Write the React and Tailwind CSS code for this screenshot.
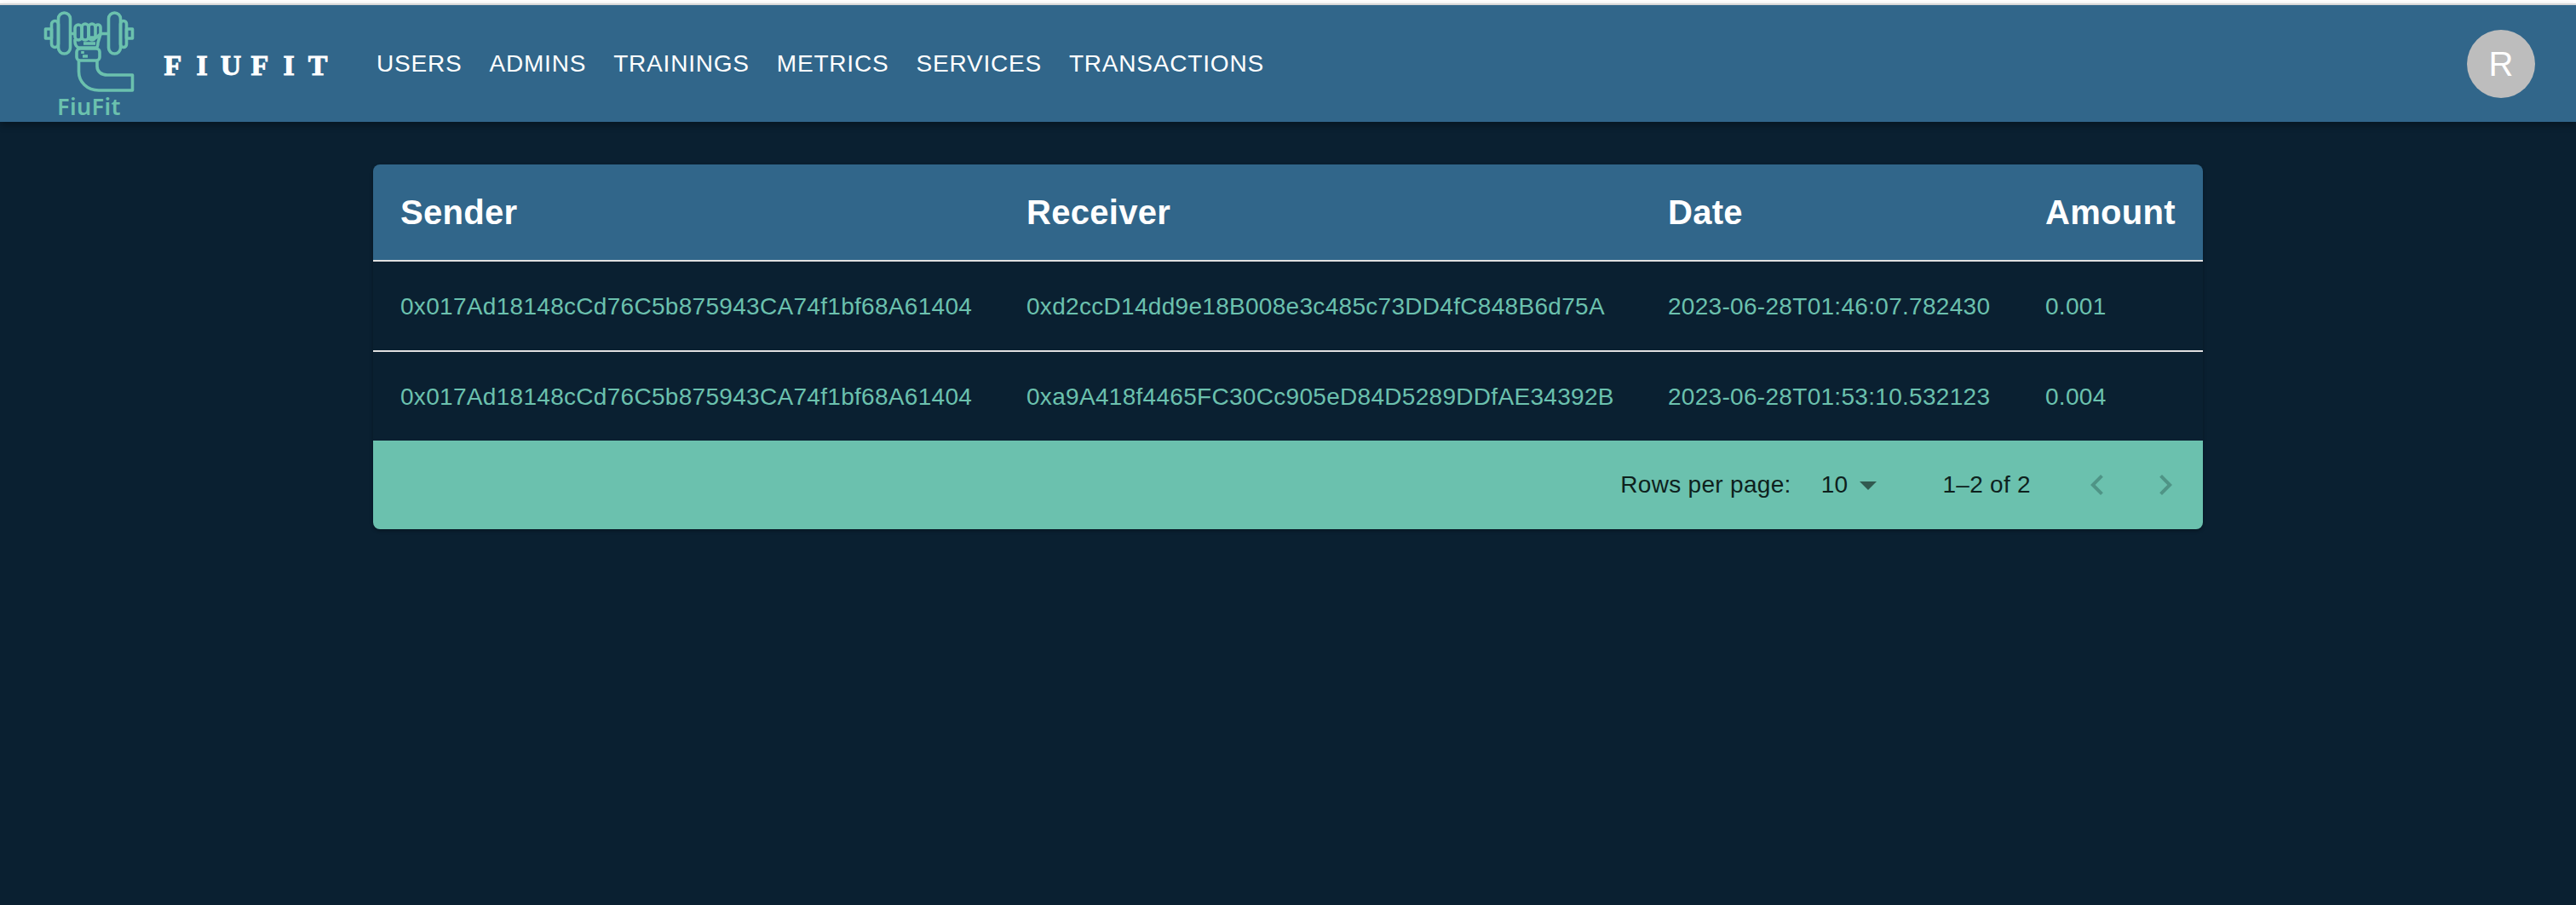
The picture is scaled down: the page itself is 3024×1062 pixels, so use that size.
import React from "react";

const navItems = ["USERS", "ADMINS", "TRAININGS", "METRICS", "SERVICES", "TRANSACTIONS"];

const transactions = [
  {
    sender: "0x017Ad18148cCd76C5b875943CA74f1bf68A61404",
    receiver: "0xd2ccD14dd9e18B008e3c485c73DD4fC848B6d75A",
    date: "2023-06-28T01:46:07.782430",
    amount: "0.001",
  },
  {
    sender: "0x017Ad18148cCd76C5b875943CA74f1bf68A61404",
    receiver: "0xa9A418f4465FC30Cc905eD84D5289DDfAE34392B",
    date: "2023-06-28T01:53:10.532123",
    amount: "0.004",
  },
];

function Logo() {
  return (
    <svg viewBox="0 0 130 137" className="h-[137px] w-[130px] shrink-0" fill="none" stroke="#6bc1ae" strokeWidth="3.6" strokeLinejoin="round">
      {/* dumbbell */}
      <rect x="28.5" y="9" width="14" height="48" rx="7" />
      <rect x="20.5" y="18.5" width="8" height="31" rx="4" />
      <rect x="13.5" y="28" width="7" height="11" />
      <rect x="87.5" y="9" width="14" height="48" rx="7" />
      <rect x="101.5" y="18.5" width="7" height="31" rx="3.5" />
      <rect x="108.5" y="28" width="7" height="11" />
      <path d="M42.5 33.5H48M78 33.5H87.5" />
      {/* fist */}
      <rect x="48" y="23" width="8" height="18" rx="4" />
      <rect x="56" y="22" width="8" height="19" rx="4" />
      <rect x="64" y="22" width="8" height="19" rx="4" />
      <path d="M72 26c0-4 6-4 6 0v8l-5 4h-7" />
      <path d="M48 40v3c0 3 2 7 5 7h19c2 0 3-3 3-6l3-10" />
      <path d="M58 45h14" />
      {/* wrist and arm */}
      <rect x="50" y="51" width="27" height="14" rx="4" />
      <path d="M57 54v3M57 60h6" />
      <path d="M52.5 65V78C52.5 90 62 100 76 100H115.5V82H86C79 82 74 78 74 72V65" />
      <text x="27" y="129" fill="#6bc1ae" stroke="none" fontSize="27" fontWeight="600" fontFamily="'Noto Sans', sans-serif" letterSpacing="0.4">
        FiuFit
      </text>
    </svg>
  );
}

export default function App() {
  return (
    <div className="flex h-screen flex-col overflow-hidden bg-[#0a2031] font-['Liberation_Sans',Arial,sans-serif]">
      <div className="h-1 bg-white"></div>
      <header className="z-10 flex h-[139px] items-center border-t-2 border-[#d8d8d8] bg-[#31668a] pr-12 pl-10 shadow-[0_4px_8px_rgba(0,0,0,0.3)]">
        <Logo />
        <div className="mt-[5px] ml-4 flex w-[240px] font-['Liberation_Serif',serif] text-[34px] leading-none font-bold text-white [-webkit-text-stroke:1px_white]">
          {"FIUFIT".split("").map((letter, i) => (
            <span key={i} className="w-[34px] text-center">
              {letter}
            </span>
          ))}
        </div>
        <nav className="flex items-center">
          {navItems.map((item) => (
            <button key={item} type="button" className="px-4 py-3 text-[28px] leading-[36px] tracking-[0.8px] text-white">
              {item}
            </button>
          ))}
        </nav>
        <div className="ml-auto flex h-20 w-20 items-center justify-center rounded-full bg-[#bdbdbd] text-[40px] text-white">
          R
        </div>
      </header>

      <main className="mx-auto mt-[50px] w-[2148px]">
        <div className="overflow-hidden rounded-lg shadow-[0_2px_4px_rgba(0,0,0,0.3)]">
          <table className="w-full table-fixed border-separate border-spacing-0 text-left">
            <colgroup>
              <col className="w-[735px]" />
              <col className="w-[753px]" />
              <col className="w-[443px]" />
              <col className="w-[217px]" />
            </colgroup>
            <thead>
              <tr className="bg-[#31668a] text-[40px] font-bold tracking-[0.3px] text-white">
                <th className="h-[114px] border-b-2 border-[#e0e0e0] px-8">Sender</th>
                <th className="h-[114px] border-b-2 border-[#e0e0e0] px-8">Receiver</th>
                <th className="h-[114px] border-b-2 border-[#e0e0e0] px-8">Date</th>
                <th className="h-[114px] border-b-2 border-[#e0e0e0] px-8">Amount</th>
              </tr>
            </thead>
            <tbody className="text-[28px] tracking-[0.3px] text-[#6bc1ae]">
              {transactions.map((tx, i) => (
                <tr key={tx.receiver}>
                  {[tx.sender, tx.receiver, tx.date, tx.amount].map((value) => (
                    <td key={value} className={i === 0 ? "h-[106px] border-b-2 border-[#e0e0e0] px-8 pt-px whitespace-nowrap" : "h-[104px] px-8 pt-px whitespace-nowrap"}>
                      {value}
                    </td>
                  ))}
                </tr>
              ))}
            </tbody>
          </table>
          <div className="flex h-[104px] items-center justify-end bg-[#6bc1ae] pr-1 text-[28px] tracking-[0.3px] text-[#0e211d]">
            <span>Rows per page:</span>
            <div className="ml-[35px] flex items-center">
              <span>10</span>
              <svg viewBox="0 0 24 24" className="h-12 w-12 fill-[#315a50]">
                <path d="M7 10l5 5 5-5z" />
              </svg>
            </div>
            <span className="ml-[63px]">1–2 of 2</span>
            <div className="ml-[38px] flex">
              <div className="p-4">
                <svg viewBox="0 0 24 24" className="h-12 w-12 fill-[#4f9486]">
                  <path d="M15.41 16.59 10.83 12l4.58-4.59L14 6l-6 6 6 6z" />
                </svg>
              </div>
              <div className="p-4">
                <svg viewBox="0 0 24 24" className="h-12 w-12 fill-[#4f9486]">
                  <path d="M8.59 16.59 13.17 12 8.59 7.41 10 6l6 6-6 6z" />
                </svg>
              </div>
            </div>
          </div>
        </div>
      </main>
    </div>
  );
}
